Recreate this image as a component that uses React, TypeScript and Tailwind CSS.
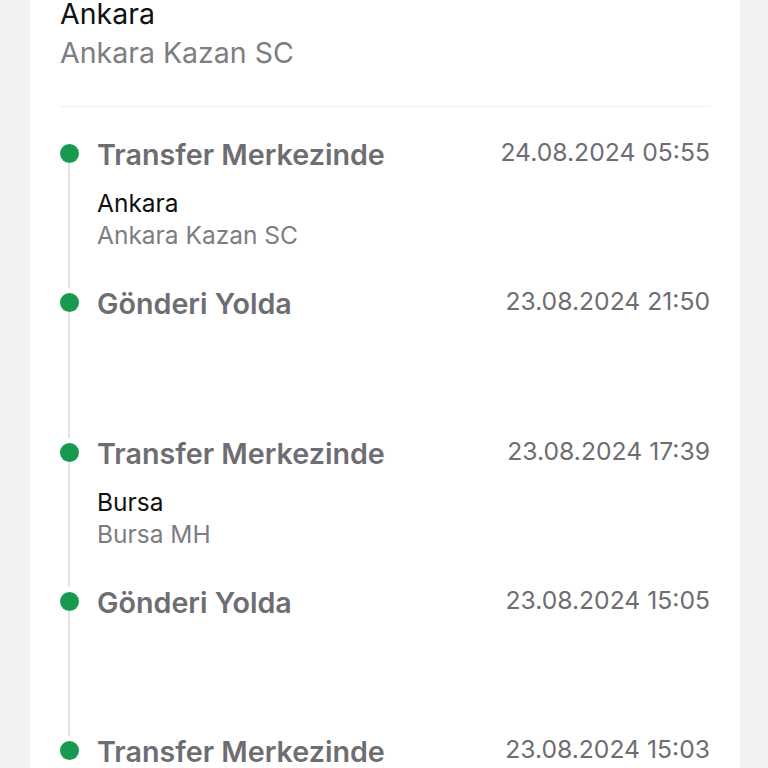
import React from "react";

type Step = {
  title: string;
  date: string;
  city?: string;
  branch?: string;
};

const steps: Step[] = [
  { title: "Transfer Merkezinde", date: "24.08.2024 05:55", city: "Ankara", branch: "Ankara Kazan SC" },
  { title: "Gönderi Yolda", date: "23.08.2024 21:50" },
  { title: "Transfer Merkezinde", date: "23.08.2024 17:39", city: "Bursa", branch: "Bursa MH" },
  { title: "Gönderi Yolda", date: "23.08.2024 15:05" },
  { title: "Transfer Merkezinde", date: "23.08.2024 15:03" },
];

const TimelineItem = ({ step, last }: { step: Step; last: boolean }) => {
  return (
    <div className="flex h-[149.25px] gap-[19px]">
      <div className="flex w-[18px] shrink-0 flex-col items-center pt-[5px]">
        <div className="h-[19px] w-[19px] shrink-0 rounded-full bg-[#17994f]" />
        {!last && <div className="w-[2px] flex-1 bg-[#e4e4e6]" />}
      </div>
      <div className="flex flex-1 flex-col">
        <div className="flex items-start justify-between">
          <span className="text-[28.7px] font-semibold leading-[32px] text-[#6d6d72]">{step.title}</span>
          <span className="-mt-[1px] text-[24.7px] leading-[28px] text-[#6d6d72]">{step.date}</span>
        </div>
        {step.city && (
          <div className="mt-[16px] flex flex-col">
            <span className="text-[24.5px] leading-[32px] text-[#111]">{step.city}</span>
            <span className="text-[24.5px] leading-[32px] text-[#7d7d82]">{step.branch}</span>
          </div>
        )}
      </div>
    </div>
  );
};

export default function App() {
  return (
    <div className="h-[768px] overflow-hidden bg-[#f2f2f4] px-[30px] font-['Inter',sans-serif]">
      <div className="h-full w-[710px] bg-white px-[30px]">
        <div className="flex flex-col">
          <span className="-mt-[4px] text-[28.5px] leading-[36px] text-[#111]">Ankara</span>
          <span className="mt-[3px] text-[28.5px] leading-[36px] text-[#7d7d82]">Ankara Kazan SC</span>
        </div>
        <div className="mt-[35px] h-[1px] bg-[#efeff1]" />
        <div className="flex flex-col pt-[32px]">
          {steps.map((s, i) => (
            <TimelineItem key={i} step={s} last={i === steps.length - 1} />
          ))}
        </div>
      </div>
    </div>
  );
}
